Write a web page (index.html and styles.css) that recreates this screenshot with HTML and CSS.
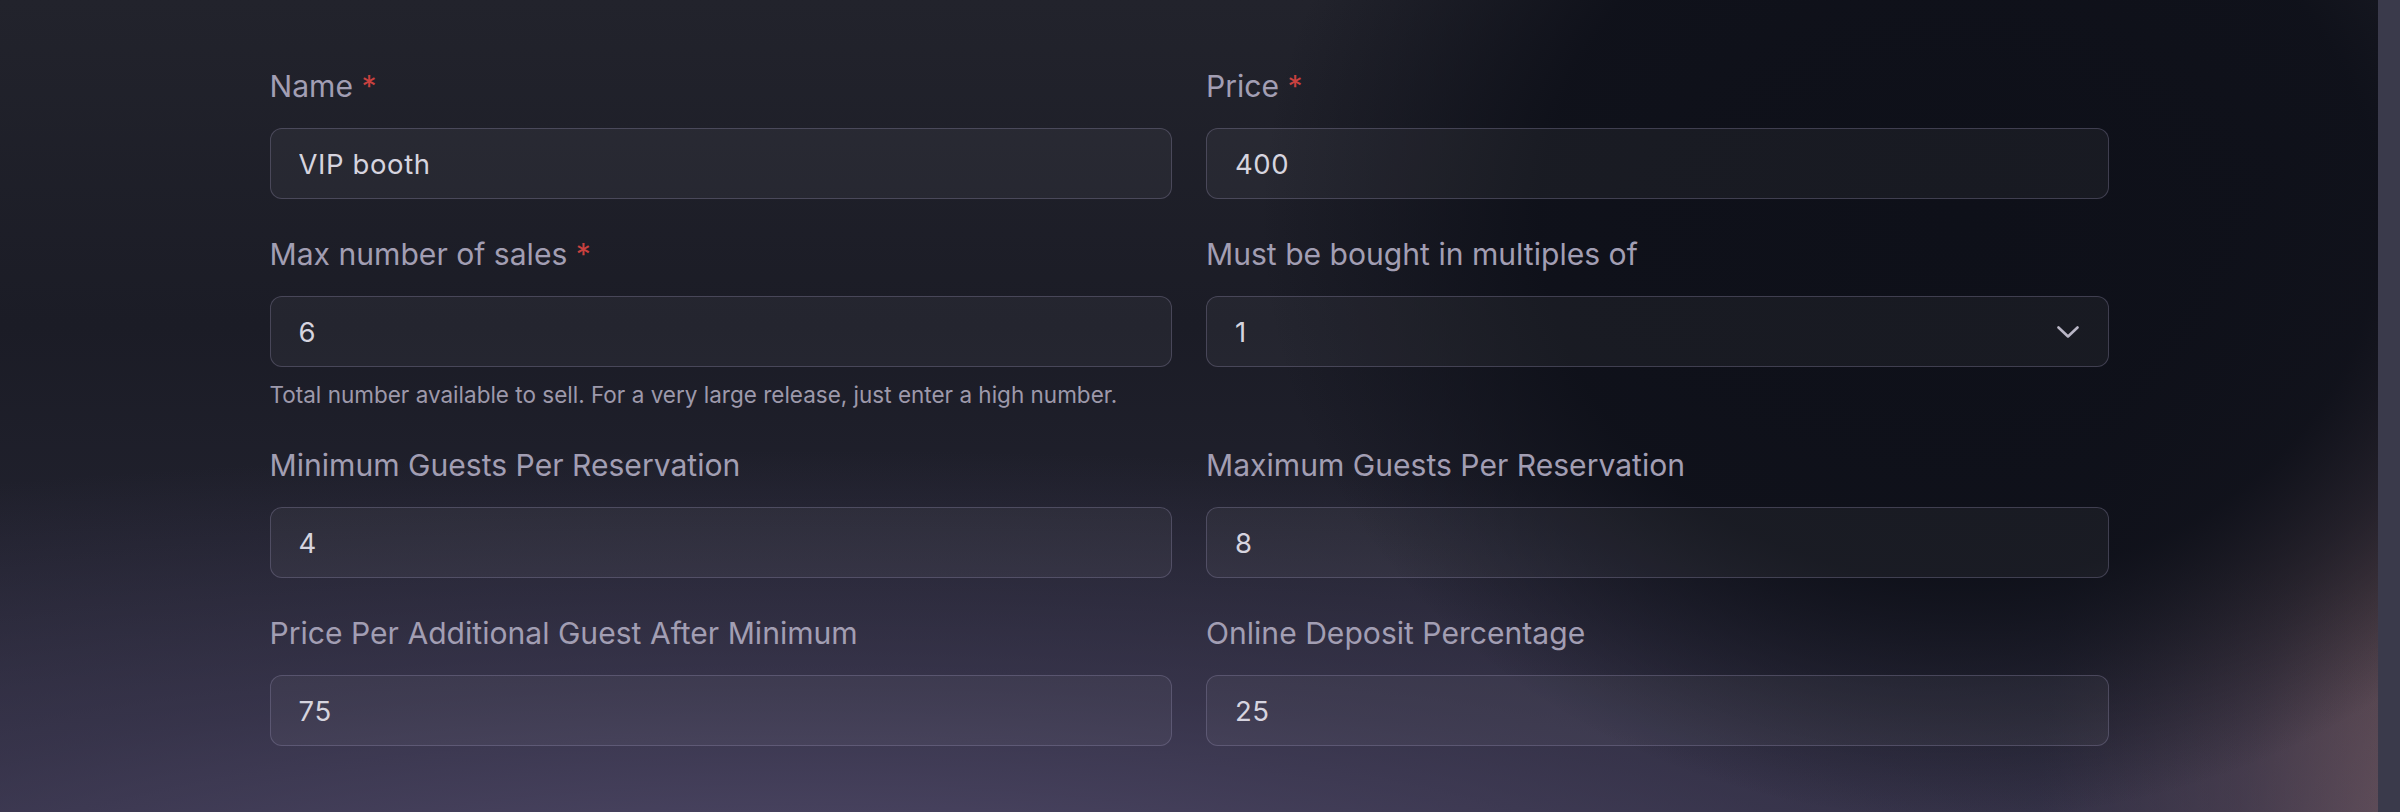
FILE: index.html
```html
<!DOCTYPE html>
<html lang="en">
<head>
<meta charset="utf-8">
<title>Reservation item</title>
<link rel="stylesheet" href="styles.css">
</head>
<body>
<div class="page">
  <main class="main">
    <form class="form">
      <div class="field">
        <label class="label">Name <span class="req">*</span></label>
        <input class="input" type="text" value="VIP booth">
      </div>
      <div class="field">
        <label class="label">Price <span class="req">*</span></label>
        <input class="input" type="text" value="400">
      </div>
      <div class="field">
        <label class="label">Max number of sales <span class="req">*</span></label>
        <input class="input" type="text" value="6">
        <p class="help">Total number available to sell. For a very large release, just enter a high number.</p>
      </div>
      <div class="field">
        <label class="label">Must be bought in multiples of</label>
        <div class="input select">
          <span>1</span>
          <svg class="chev" width="22" height="12" viewBox="0 0 22 12" fill="none"><path d="M1.5 1.5 L11 10.5 L20.5 1.5" stroke="currentColor" stroke-width="2.6" stroke-linecap="round" stroke-linejoin="round"/></svg>
        </div>
      </div>
      <div class="field">
        <label class="label">Minimum Guests Per Reservation</label>
        <input class="input" type="text" value="4">
      </div>
      <div class="field">
        <label class="label">Maximum Guests Per Reservation</label>
        <input class="input" type="text" value="8">
      </div>
      <div class="field">
        <label class="label">Price Per Additional Guest After Minimum</label>
        <input class="input" type="text" value="75">
      </div>
      <div class="field">
        <label class="label">Online Deposit Percentage</label>
        <input class="input" type="text" value="25">
      </div>
    </form>
  </main>
  <div class="scrollbar"></div>
</div>
</body>
</html>
```
FILE: styles.css
```css
html, body {
  margin: 0;
  padding: 0;
  height: 812px;
  overflow: hidden;
  background: #14161f;
}

.page {
  display: flex;
  height: 812px;
  font-family: Inter, "Noto Sans", sans-serif;
}

.main {
  flex: 1;
  padding-top: 65px;
  background:
    radial-gradient(ellipse 700px 600px at 1960px 220px, rgba(14,16,25,1) 0%, rgba(14,16,25,0.92) 60%, rgba(14,16,25,0) 100%),
    radial-gradient(ellipse 2200px 470px at 800px 920px, rgba(84,77,110,0.95) 0%, rgba(70,64,94,0.55) 50%, rgba(40,40,56,0) 100%),
    radial-gradient(ellipse 400px 760px at 2440px 860px, rgba(126,96,98,0.9) 0%, rgba(104,80,88,0.45) 50%, rgba(40,36,48,0) 100%),
    linear-gradient(180deg, #22232c 0%, #1b1c26 40%, #272736 100%);
}

.form {
  width: 1839px;
  margin: 0 auto;
  display: grid;
  grid-template-columns: 1fr 1fr;
  column-gap: 34px;
  row-gap: 34px;
  align-items: start;
}

.field {
  display: flex;
  flex-direction: column;
}

.label {
  font-size: 30.1px;
  line-height: 42px;
  font-weight: 400;
  color: #a29eb3;
  margin-bottom: 21px;
}

.req {
  color: #c9413f;
}

.input {
  box-sizing: border-box;
  height: 71px;
  width: 100%;
  margin: 0;
  padding: 0 28px;
  border: 1.5px solid rgba(155,150,185,0.3);
  border-radius: 12px;
  background: rgba(255,255,255,0.045);
  color: #d6d4df;
  font-family: Inter, "Noto Sans", sans-serif;
  font-size: 27.5px;
  letter-spacing: 0.6px;
  outline: none;
}

.select {
  display: flex;
  align-items: center;
  justify-content: space-between;
}

.chev {
  color: #b9b6c6;
  margin-right: 1px;
}

.help {
  margin: 13px 0 0;
  font-size: 22.5px;
  line-height: 30px;
  color: #9d99ab;
}

.scrollbar {
  width: 22px;
  flex: none;
  background: #3a3a4b;
}
```
